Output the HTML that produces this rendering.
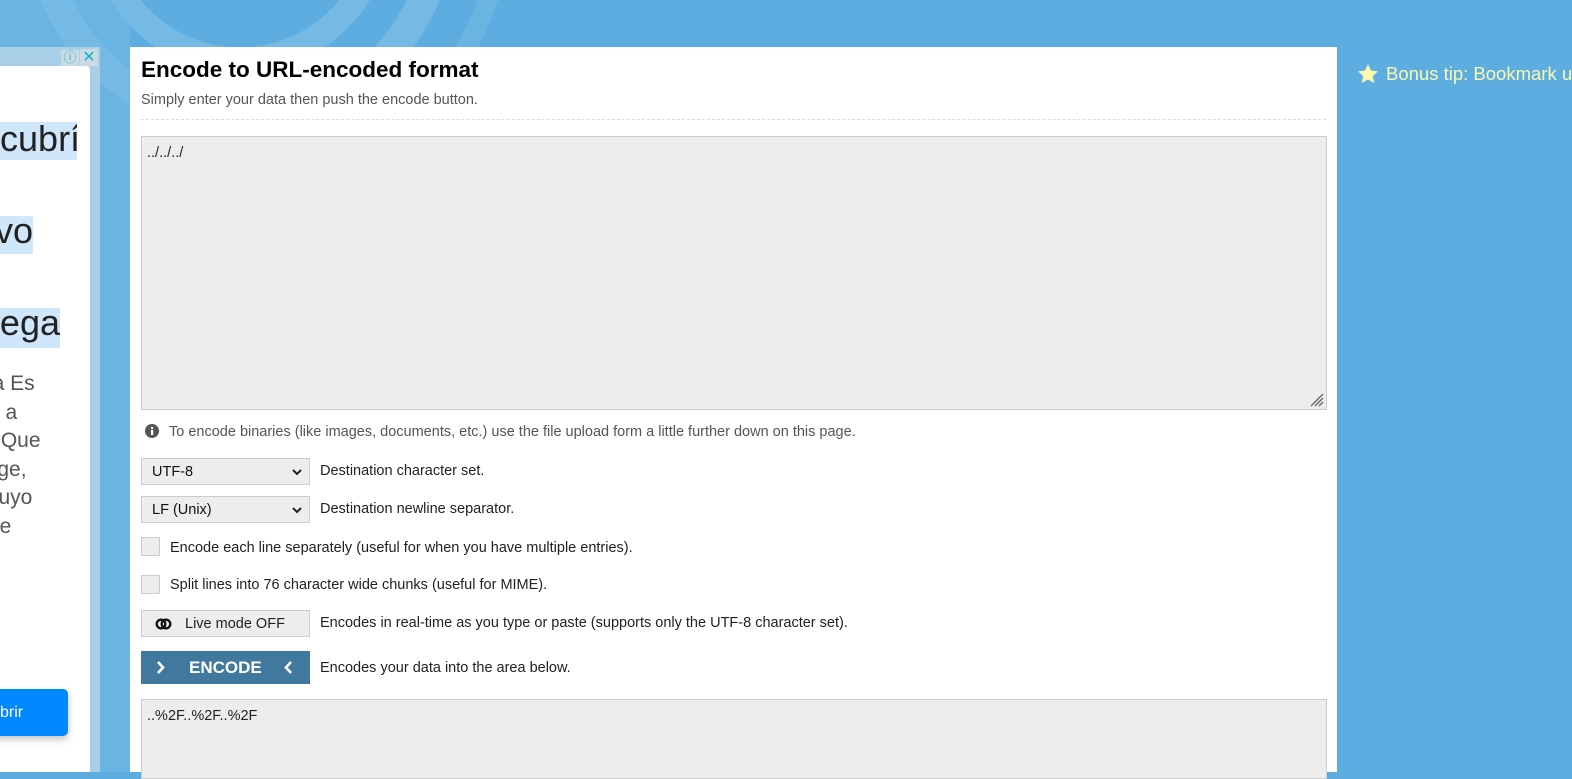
<!DOCTYPE html>
<html><head><style>
*{margin:0;padding:0;box-sizing:border-box}
body{width:1572px;height:772px;overflow:hidden;background:#5dade0;font-family:"Liberation Sans",Arial,sans-serif;position:relative}
.a{position:absolute}
.t{font-size:14.5px;color:#222;white-space:nowrap}
.sel{position:absolute;left:141px;width:169px;height:27px;background:#ededed;border:1px solid #ccc;font-size:14.5px;color:#111;padding:5px 10px}
.sel svg{position:absolute;right:6px;top:8px}
.cb{position:absolute;left:141px;width:19px;height:19px;background:#ededed;border:1px solid #ccc}
</style></head><body>
<svg class="a" style="left:0;top:0" width="1572" height="772">
<rect x="100" y="0" width="30" height="772" fill="#69b4e2"/>
<rect x="0" y="0" width="130" height="47" fill="#69b4e2"/>
<circle cx="240" cy="-80" r="200" fill="none" stroke="#74bae4" stroke-width="30"/>
<circle cx="240" cy="-80" r="140" fill="none" stroke="#74bae4" stroke-width="25"/>
<circle cx="240" cy="-80" r="260" fill="none" stroke="#6ab4e2" stroke-width="20"/>
</svg>
<div class="a" style="left:0;top:47px;width:100px;height:725px;background:#a9cfe6"></div>
<div class="a" style="left:0;top:66px;width:90px;height:706px;background:#fff;border-top-right-radius:4px"></div>
<div class="a" style="left:61px;top:50px;width:18px;height:16px;background:#ccdbe3;color:#1ab0c9;font-size:13px;text-align:center;line-height:16px">ⓘ</div>
<div class="a" style="left:80px;top:49px;width:18px;height:17px;background:#ccdbe3;color:#1ab0c9;font-size:16px;text-align:center;line-height:17px">✕</div>
<div class="a" style="left:0;top:122px;width:77px;height:38px;background:#cfe6fb"></div>
<div class="a" style="left:-20px;top:118px;font-size:36px;color:#222;white-space:nowrap;text-align:right;width:97px;overflow:hidden">ecubrí</div>
<div class="a" style="left:0;top:216px;width:33px;height:38px;background:#cfe6fb"></div>
<div class="a" style="left:0;top:210px;font-size:36px;color:#222;width:33px;text-align:right;overflow:hidden;white-space:nowrap;direction:rtl">vo</div>
<div class="a" style="left:0;top:308px;width:60px;height:40px;background:#cfe6fb"></div>
<div class="a" style="left:0;top:302px;font-size:36px;color:#222;width:60px;overflow:hidden;white-space:nowrap;direction:rtl">ega</div>
<div class="a" style="left:-12px;top:370px;width:72px;font-size:21px;line-height:28.5px;color:#555;text-align:left;white-space:nowrap">ia Es<br>&nbsp;&nbsp;&nbsp;a<br>¿Que<br>lige,<br>cuyo<br>de</div>
<div class="a" style="left:-10px;top:689px;width:78px;height:47px;background:#0088fe;border-radius:5px;box-shadow:0 3px 8px rgba(0,0,0,.25);color:#fff;font-size:16px;line-height:47px;padding-left:10px">brir</div>

<div class="a" style="left:130px;top:47px;width:1207px;height:725px;background:#fff"></div>
<div class="a" style="left:141px;top:57px;font-size:22.5px;font-weight:bold;color:#000">Encode to URL-encoded format</div>
<div class="a" style="left:141px;top:92px;font-size:14.5px;color:#555">Simply enter your data then push the encode button.</div>
<div class="a" style="left:141px;top:119px;width:1185px;border-top:1px dashed #ddd"></div>
<div class="a" style="left:141px;top:136px;width:1186px;height:274px;background:#ededed;border:1px solid #ccc;font-size:14.5px;padding:8px 5px;color:#222">../../../
<svg class="a" style="right:2px;bottom:2px" width="16" height="16"><path d="M3 15L15 3M7 15L15 7M11 15L15 11" stroke="#666" stroke-width="1.3"/></svg></div>
<svg class="a" style="left:145px;top:424px" width="14" height="14"><circle cx="7" cy="7" r="7" fill="#555"/><rect x="6" y="6" width="2.2" height="5" fill="#fff"/><circle cx="7.1" cy="4" r="1.2" fill="#fff"/></svg>
<div class="a" style="left:169px;top:424px;font-size:14.5px;color:#555;white-space:nowrap">To encode binaries (like images, documents, etc.) use the file upload form a little further down on this page.</div>
<div class="sel" style="top:458px">UTF-8<svg width="12" height="10"><path d="M2 3l4 4 4-4" stroke="#222" stroke-width="2" fill="none"/></svg></div>
<div class="a t" style="left:320px;top:463px">Destination character set.</div>
<div class="sel" style="top:496px">LF (Unix)<svg width="12" height="10"><path d="M2 3l4 4 4-4" stroke="#222" stroke-width="2" fill="none"/></svg></div>
<div class="a t" style="left:320px;top:501px">Destination newline separator.</div>
<div class="cb" style="top:537px"></div>
<div class="a t" style="left:170px;top:540px">Encode each line separately (useful for when you have multiple entries).</div>
<div class="cb" style="top:575px"></div>
<div class="a t" style="left:170px;top:577px">Split lines into 76 character wide chunks (useful for MIME).</div>
<div class="a" style="left:141px;top:610px;width:169px;height:27px;background:#ededed;border:1px solid #ccc;font-size:14.5px;color:#222;padding:5px 0 0 43px">Live mode OFF
<svg class="a" style="left:13px;top:7px" width="18" height="12"><circle cx="6" cy="6" r="4.3" fill="none" stroke="#111" stroke-width="2.3"/><circle cx="11" cy="6" r="4.3" fill="none" stroke="#111" stroke-width="2.3"/></svg></div>
<div class="a t" style="left:320px;top:615px">Encodes in real-time as you type or paste (supports only the UTF-8 character set).</div>
<div class="a" style="left:141px;top:651px;width:169px;height:33px;background:#41789d;color:#fff;font-size:17px;font-weight:bold;line-height:33px;padding-left:48px">ENCODE
<svg class="a" style="left:15px;top:9px" width="10" height="15"><path d="M2 2l5 5.5L2 13" stroke="#fff" stroke-width="2.6" fill="none"/></svg>
<svg class="a" style="left:142px;top:9px" width="10" height="15"><path d="M8 2L3 7.5 8 13" stroke="#fff" stroke-width="2.6" fill="none"/></svg></div>
<div class="a t" style="left:320px;top:660px">Encodes your data into the area below.</div>
<div class="a" style="left:141px;top:699px;width:1186px;height:80px;background:#ededed;border:1px solid #ccc;font-size:14.5px;padding:8px 5px;color:#222">..%2F..%2F..%2F</div>

<svg class="a" style="left:1357px;top:63px" width="22" height="21"><path d="M11 1l3 6.5 7 .8-5.2 4.8 1.5 7L11 16.5 4.7 20l1.5-7L1 8.3l7-.8z" fill="#fbf8b0"/></svg>
<div class="a" style="left:1386px;top:63px;font-size:18.5px;color:#fbf8b0;white-space:nowrap">Bonus tip: Bookmark us!</div>
</body></html>
